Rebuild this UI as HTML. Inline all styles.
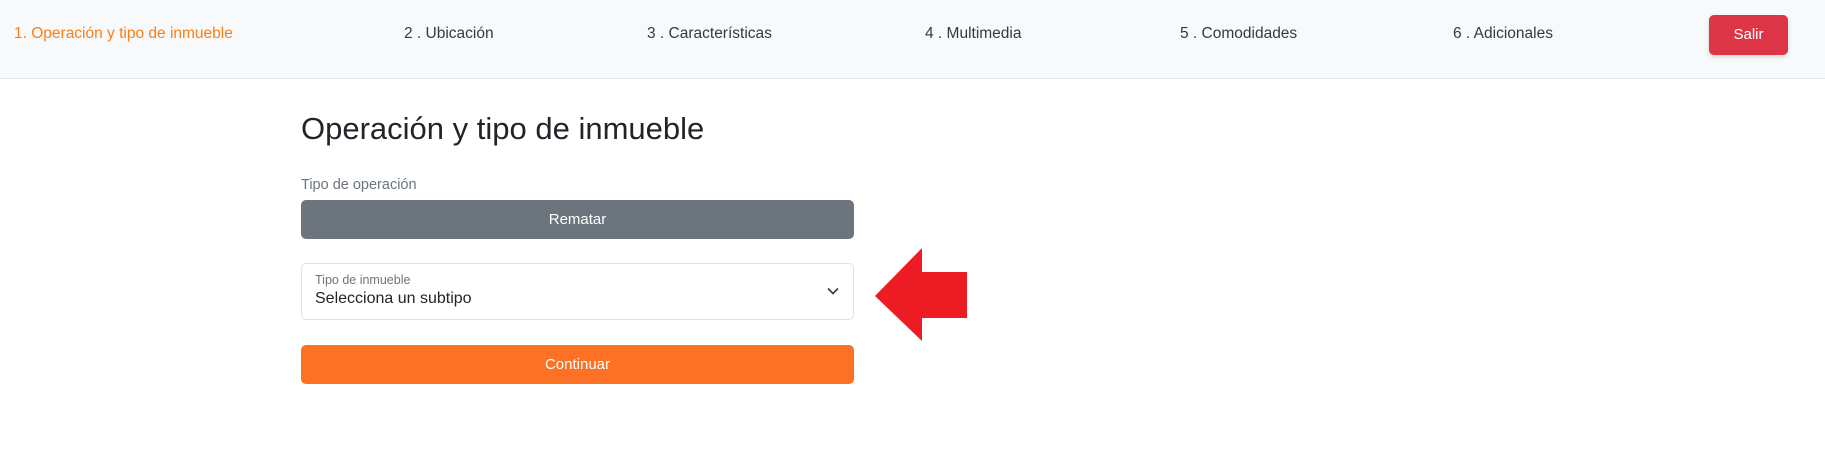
<!DOCTYPE html>
<html><head><meta charset="utf-8"><style>
*{margin:0;padding:0;box-sizing:border-box}
body{width:1825px;height:475px;background:#fff;font-family:"Liberation Sans",sans-serif;position:relative;overflow:hidden}
.hdr{position:absolute;left:0;top:0;width:1825px;height:79px;background:#f8f9fa;border-bottom:1px solid #e3e5e8}
.n{position:absolute;top:25px;font-size:15.5px;color:#343a40;white-space:nowrap}
.salir{position:absolute;left:1709px;top:15px;width:79px;height:40px;background:#dc3545;border-radius:5px;color:#fff;font-size:15px;text-align:center;line-height:40px;box-shadow:0 2px 4px rgba(0,0,0,.15)}
h1{position:absolute;left:301px;top:111px;font-size:31px;font-weight:normal;color:#212529}
.lbl{position:absolute;left:301px;top:177px;font-size:14.5px;color:#6c757d}
.btn{position:absolute;left:301px;width:553px;border-radius:5px;color:#fff;font-size:15px;text-align:center}
.sel{position:absolute;left:301px;top:263px;width:553px;height:57px;border:1px solid #dee2e6;border-radius:5px}
</style></head><body>
<div class="hdr">
<div class="n" style="left:14px;color:#fd7e14">1. Operación y tipo de inmueble</div>
<div class="n" style="left:404px">2 . Ubicación</div>
<div class="n" style="left:647px">3 . Características</div>
<div class="n" style="left:925px">4 . Multimedia</div>
<div class="n" style="left:1180px">5 . Comodidades</div>
<div class="n" style="left:1453px">6 . Adicionales</div>
<div class="salir">Salir</div>
</div>
<h1>Operación y tipo de inmueble</h1>
<div class="lbl">Tipo de operación</div>
<div class="btn" style="top:200px;height:39px;line-height:39px;background:#6c757d">Rematar</div>
<div class="sel">
<div style="position:absolute;left:13px;top:9px;font-size:12.5px;color:#6c757d">Tipo de inmueble</div>
<div style="position:absolute;left:13px;top:26px;font-size:16px;color:#212529">Selecciona un subtipo</div>
<svg style="position:absolute;right:14px;top:22px" width="12" height="10" viewBox="0 0 12 10"><path d="M1 2.5 L6 7.5 L11 2.5" fill="none" stroke="#343a40" stroke-width="1.6"/></svg>
</div>
<div class="btn" style="top:345px;height:39px;line-height:39px;background:#fd7125">Continuar</div>
<svg style="position:absolute;left:870px;top:245px" width="100" height="100" viewBox="870 245 100 100"><path d="M875 296 L922 248 L922 272 L967 272 L967 318 L922 318 L922 341 Z" fill="#ed1c24"/></svg>
</body></html>
